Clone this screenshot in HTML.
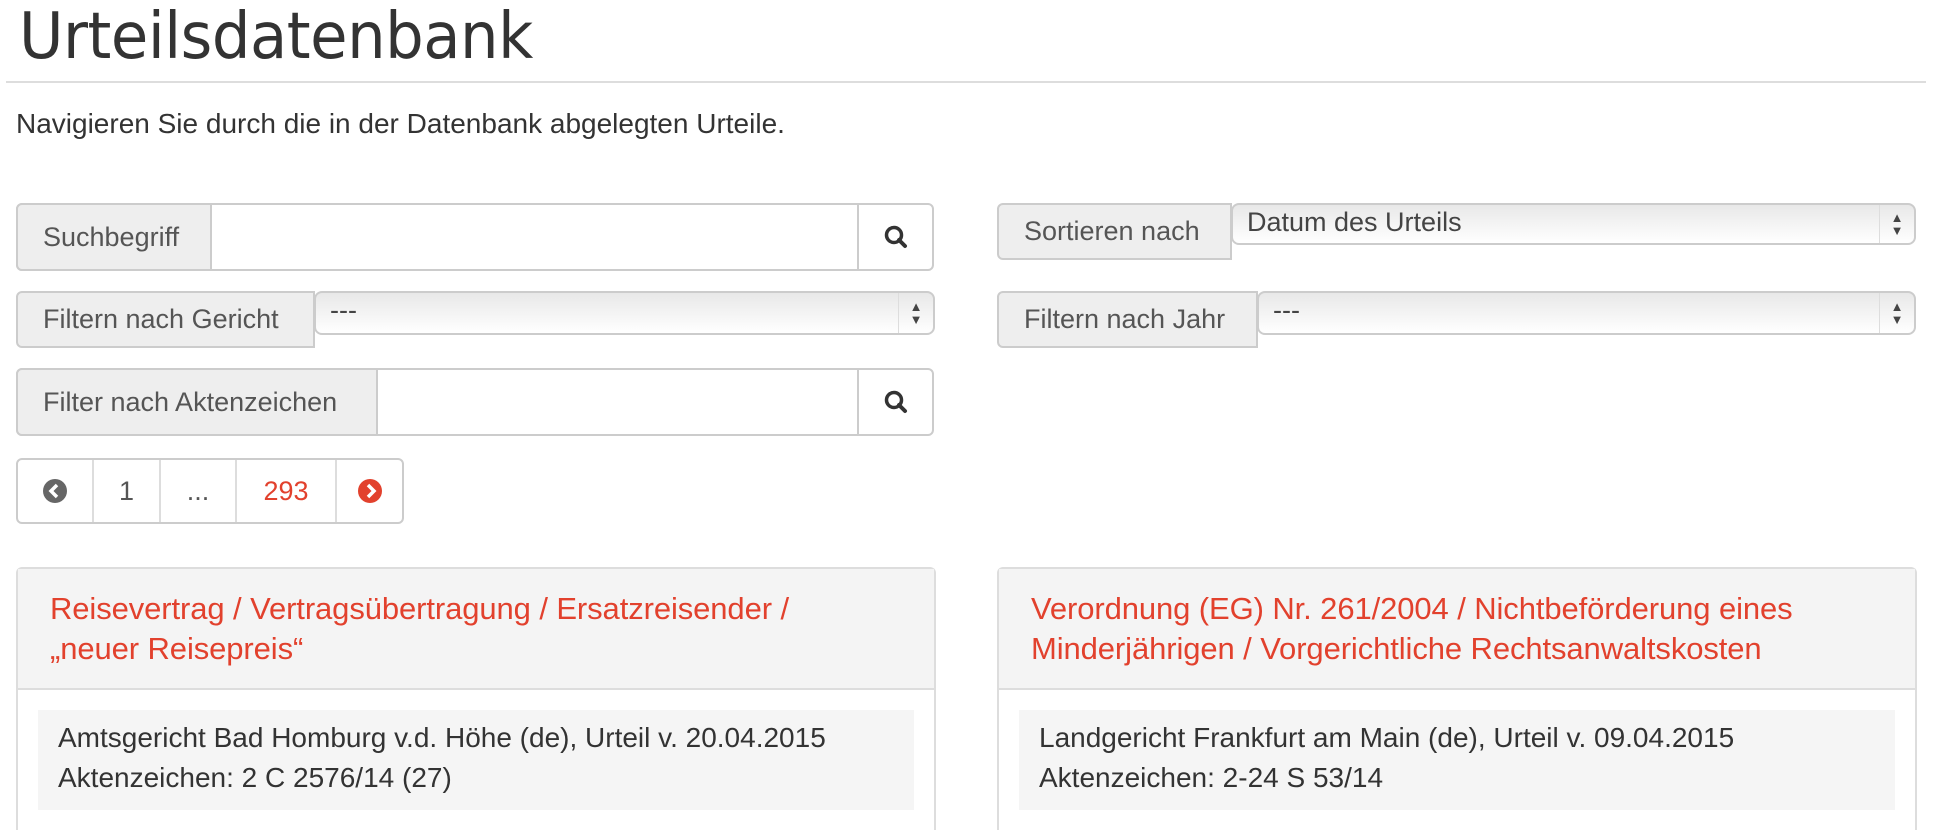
<!DOCTYPE html>
<html><head><meta charset="utf-8"><style>
body{margin:0;width:1934px;height:830px;overflow:hidden;background:#fff;font-family:"Liberation Sans",sans-serif;color:#333;position:relative}
.a{position:absolute;box-sizing:border-box}
.h1{left:19px;top:0px;font-size:64px;color:#333;letter-spacing:-0.5px;font-family:"DejaVu Sans","Liberation Sans",sans-serif;font-weight:normal;transform:scaleX(0.95);transform-origin:left}
.hr{left:6px;top:81px;width:1920px;height:2px;background:#ddd}
.sub{left:16px;top:108px;font-size:28px}
.box{border:2px solid #ccc;border-radius:6px;background:#fff}
.lab{background:#eee;border:2px solid #ccc;border-radius:6px 0 0 6px;font-size:27px;color:#555;display:flex;align-items:center;padding-left:25px}
.btn{border-left:2px solid #ccc;display:flex;align-items:center;justify-content:center}
.sel{border:2px solid #ccc;border-radius:8px;background:linear-gradient(#e8e8e8,#fff);font-size:27px;padding:2px 0 0 14px;color:#444}
.arr{position:absolute;right:0;top:0;bottom:0;width:34px;border-left:1px solid #ddd;font-size:13px;line-height:13px;display:flex;flex-direction:column;align-items:center;justify-content:center;color:#444}
.card{border:2px solid #ddd;border-radius:6px 6px 0 0;border-bottom:none}
.ch{background:#f4f4f4;border-bottom:2px solid #ddd;height:121px;padding:20px 0 0 32px;box-sizing:border-box;color:#e2412d;font-size:31px;line-height:40px;letter-spacing:-0.1px}
.inner{position:absolute;background:#f5f5f5;font-size:28px;line-height:40px;padding:8px 0 0 20px;box-sizing:border-box;color:#333}
.pg{display:flex;align-items:center;justify-content:center;border-right:2px solid #ddd}
</style></head><body>
<div class="a h1">Urteilsdatenbank</div>
<div class="a hr"></div>
<div class="a sub">Navigieren Sie durch die in der Datenbank abgelegten Urteile.</div>

<div class="a box" style="left:16px;top:203px;width:918px;height:68px"></div>
<div class="a lab" style="left:16px;top:203px;width:196px;height:68px">Suchbegriff</div>
<div class="a btn" style="left:857px;top:205px;width:75px;height:64px"><svg width="26" height="26" viewBox="0 0 26 26"><circle cx="11" cy="11" r="7.5" fill="none" stroke="#333" stroke-width="3.5"/><path d="M16 16l6 6" stroke="#333" stroke-width="4" stroke-linecap="round"/></svg></div>

<div class="a lab" style="left:16px;top:291px;width:299px;height:57px">Filtern nach Gericht</div>
<div class="a sel" style="left:314px;top:291px;width:621px;height:44px">---<div class="arr">▲<br>▼</div></div>

<div class="a box" style="left:16px;top:368px;width:918px;height:68px"></div>
<div class="a lab" style="left:16px;top:368px;width:362px;height:68px">Filter nach Aktenzeichen</div>
<div class="a btn" style="left:857px;top:370px;width:75px;height:64px"><svg width="26" height="26" viewBox="0 0 26 26"><circle cx="11" cy="11" r="7.5" fill="none" stroke="#333" stroke-width="3.5"/><path d="M16 16l6 6" stroke="#333" stroke-width="4" stroke-linecap="round"/></svg></div>

<div class="a lab" style="left:997px;top:203px;width:235px;height:57px">Sortieren nach</div>
<div class="a sel" style="left:1231px;top:203px;width:685px;height:42px">Datum des Urteils<div class="arr">▲<br>▼</div></div>
<div class="a lab" style="left:997px;top:291px;width:261px;height:57px">Filtern nach Jahr</div>
<div class="a sel" style="left:1257px;top:291px;width:659px;height:44px">---<div class="arr">▲<br>▼</div></div>

<div class="a box" style="left:16px;top:458px;width:388px;height:66px;display:flex;font-size:27px">
<div class="pg" style="width:74px"><svg width="26" height="26"><circle cx="13" cy="13" r="12" fill="#666"/><path d="M15 7l-6 6 6 6" stroke="#fff" stroke-width="3.5" fill="none"/></svg></div>
<div class="pg" style="width:65px;color:#555">1</div>
<div class="pg" style="width:74px;color:#555">...</div>
<div class="pg" style="width:98px;color:#e2412d">293</div>
<div style="flex:1;display:flex;align-items:center;justify-content:center"><svg width="26" height="26"><circle cx="13" cy="13" r="12" fill="#e2412d"/><path d="M11 7l6 6-6 6" stroke="#fff" stroke-width="3.5" fill="none"/></svg></div>
</div>

<div class="a card" style="left:16px;top:567px;width:920px;height:263px">
<div class="ch">Reisevertrag / Vertragsübertragung / Ersatzreisender /<br>„neuer Reisepreis“</div>
</div>
<div class="inner" style="left:38px;top:710px;width:876px;height:100px">Amtsgericht Bad Homburg v.d. Höhe (de), Urteil v. 20.04.2015<br>Aktenzeichen: 2 C 2576/14 (27)</div>

<div class="a card" style="left:997px;top:567px;width:920px;height:263px">
<div class="ch">Verordnung (EG) Nr. 261/2004 / Nichtbeförderung eines<br>Minderjährigen / Vorgerichtliche Rechtsanwaltskosten</div>
</div>
<div class="inner" style="left:1019px;top:710px;width:876px;height:100px">Landgericht Frankfurt am Main (de), Urteil v. 09.04.2015<br>Aktenzeichen: 2-24 S 53/14</div>
</body></html>
